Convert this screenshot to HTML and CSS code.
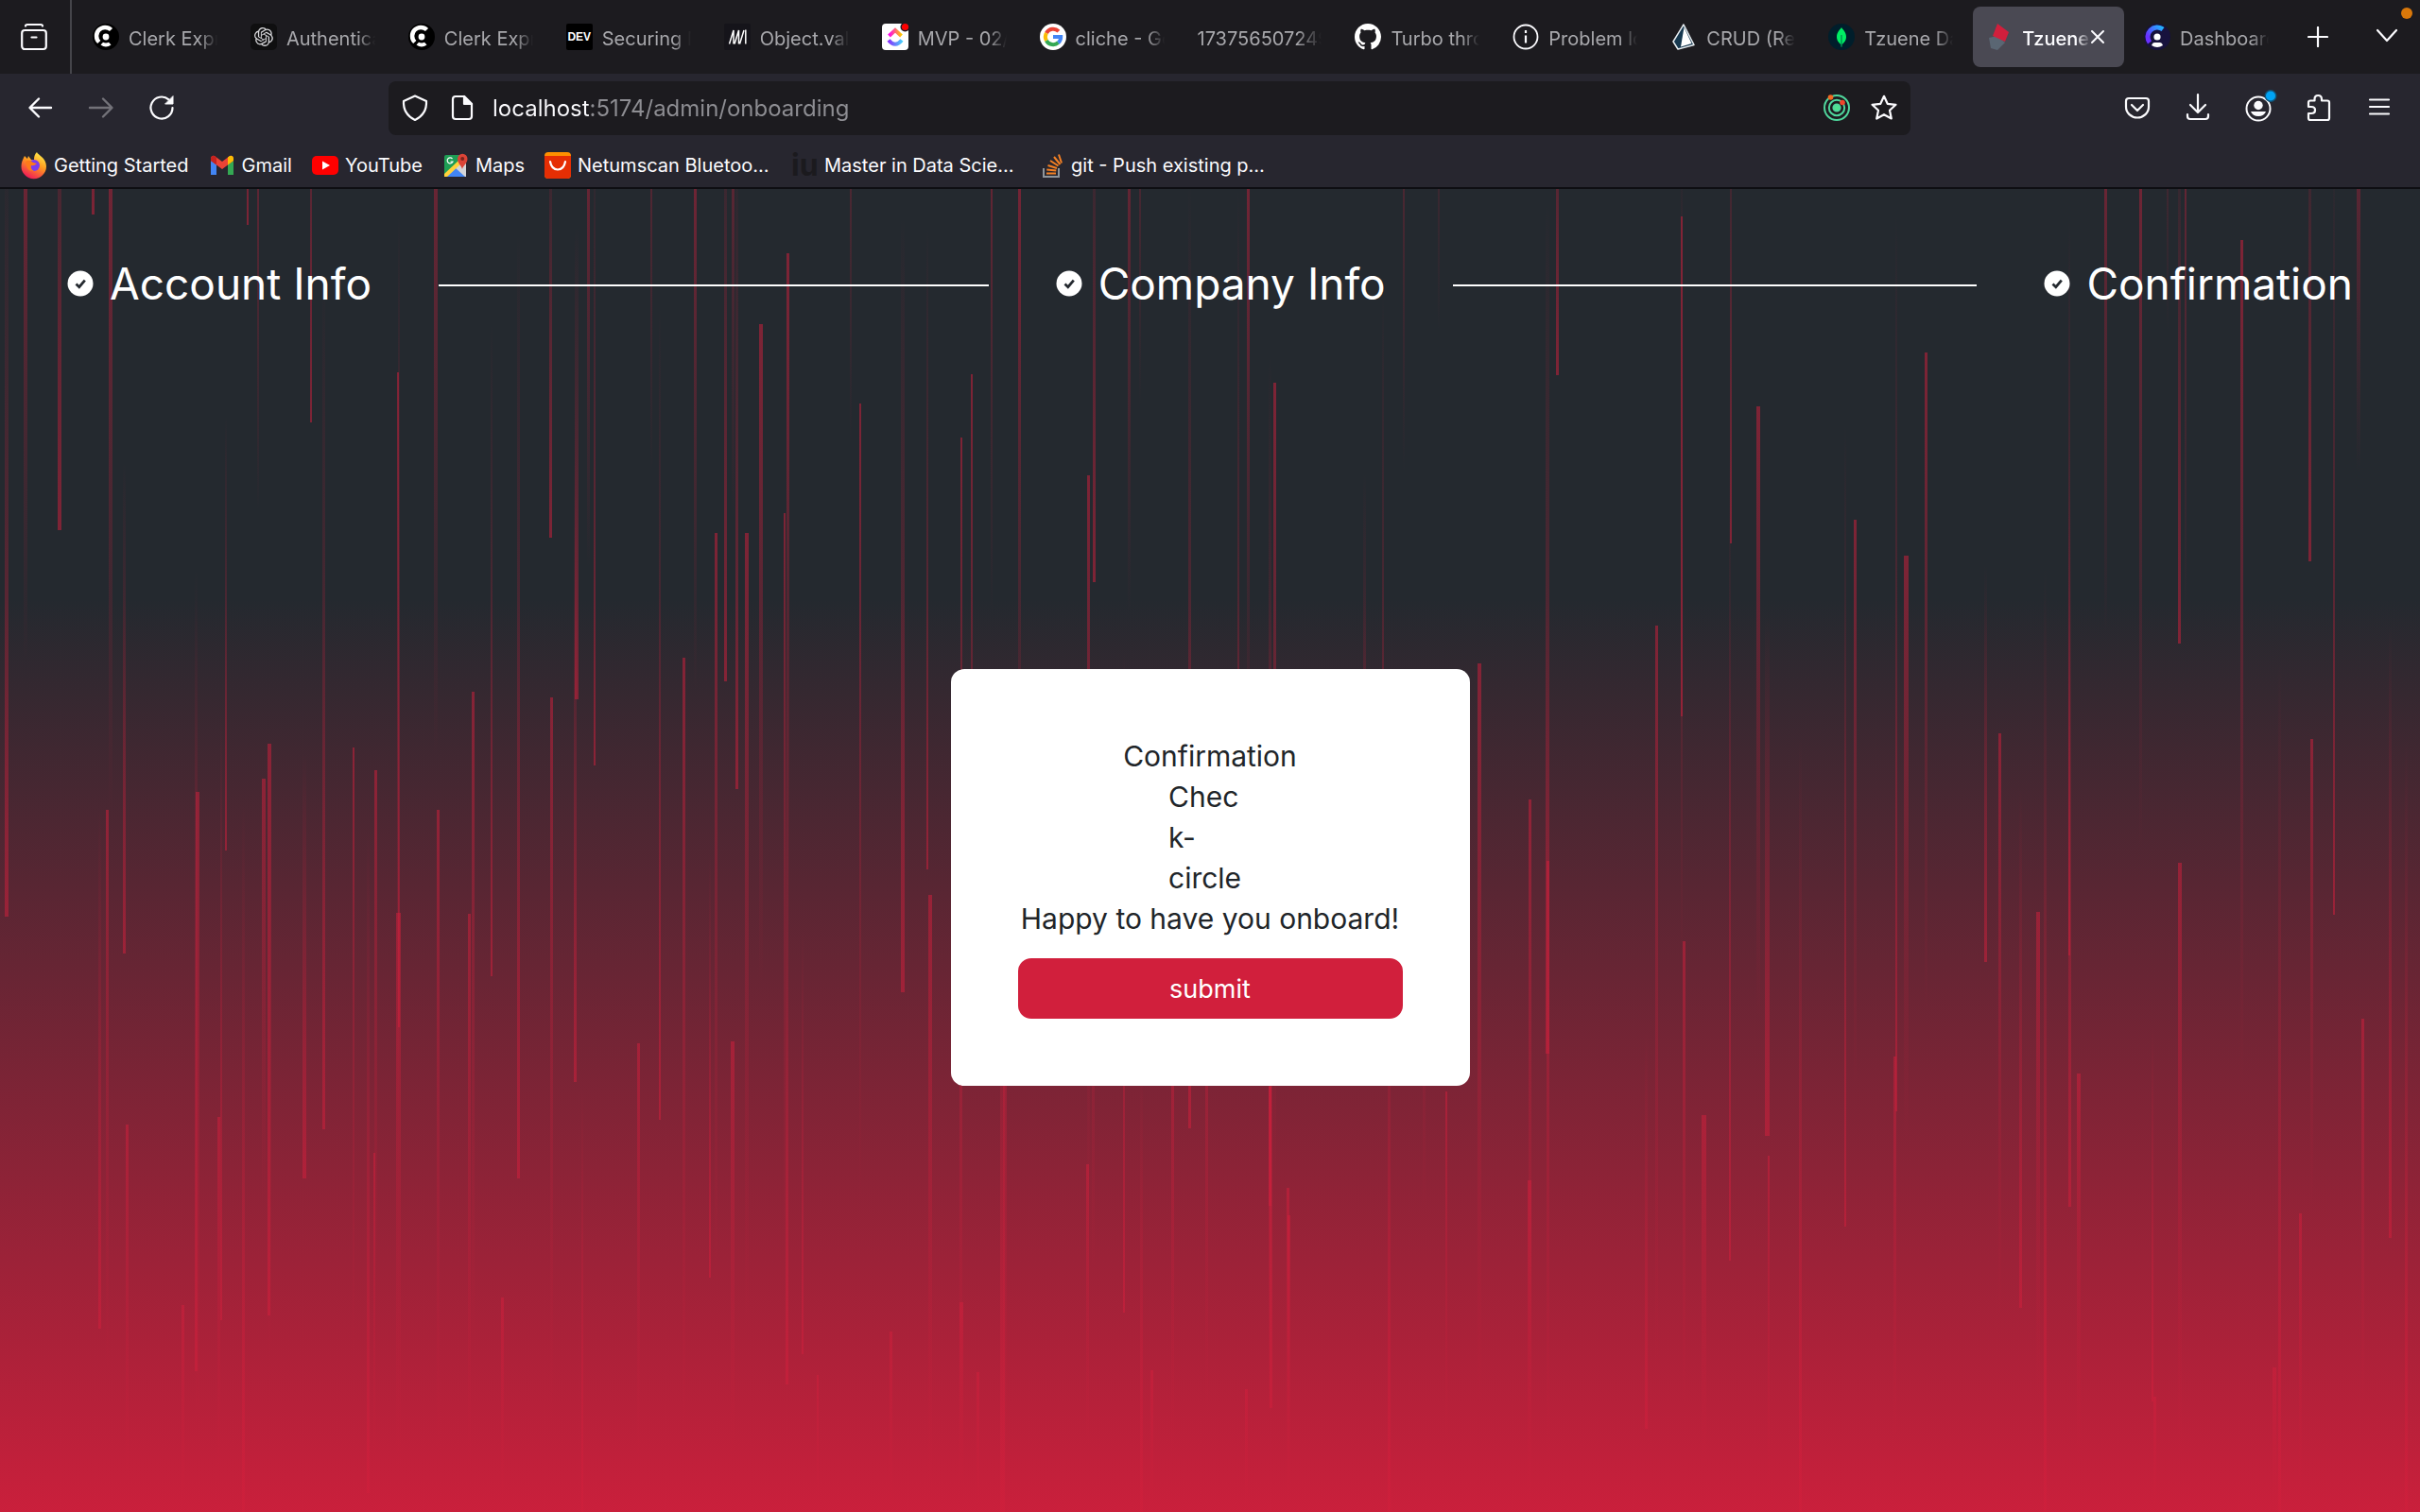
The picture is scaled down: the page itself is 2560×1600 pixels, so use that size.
FILE: index.html
```html
<!DOCTYPE html>
<html lang="en">
<head>
<meta charset="utf-8">
<title>Tzuene</title>
<link rel="stylesheet" href="styles.css">
</head>
<body>
<header class="chrome">
  <div class="tabbar">
    <button class="recent" aria-label="Recent browsing">
      <svg class="icon" viewBox="0 0 28 28" fill="none" stroke="#fbfbfe" stroke-width="2.2" stroke-linecap="round"><path d="M5 2.6C5 1 6 1 7 1h14c1 0 2 0 2 1.6"/><rect x="1.2" y="7" width="25.6" height="20" rx="3"/><path d="M11.5 14.5h5"/></svg>
    </button>
    <nav class="tabs" aria-label="Tabs">
      <div class="tab"><button class="tab-main"><svg class="icon" viewBox="0 0 28 28"><use href="#clerk"/></svg><span class="title">Clerk Expr</span></button></div>
      <div class="tab"><button class="tab-main"><svg class="icon" viewBox="0 0 28 28"><rect width="28" height="28" rx="5" fill="#0f0f10"/><path transform="translate(4 4) scale(.83)" fill="#d6d6d9" d="M22.2819 9.8211a5.9847 5.9847 0 0 0-.5157-4.9108 6.0462 6.0462 0 0 0-6.5098-2.9A6.0651 6.0651 0 0 0 4.9807 4.1818a5.9847 5.9847 0 0 0-3.9977 2.9 6.0462 6.0462 0 0 0 .7427 7.0966 5.98 5.98 0 0 0 .511 4.9107 6.051 6.051 0 0 0 6.5146 2.9001A5.9847 5.9847 0 0 0 13.2599 24a6.0557 6.0557 0 0 0 5.7718-4.2058 5.9894 5.9894 0 0 0 3.9977-2.9001 6.0557 6.0557 0 0 0-.7475-7.0729zm-9.022 12.6081a4.4755 4.4755 0 0 1-2.8764-1.0408l.1419-.0804 4.7783-2.7582a.7948.7948 0 0 0 .3927-.6813v-6.7369l2.02 1.1686a.071.071 0 0 1 .038.052v5.5826a4.504 4.504 0 0 1-4.4945 4.4944zm-9.6607-4.1254a4.4708 4.4708 0 0 1-.5346-3.0137l.142.0852 4.783 2.7582a.7712.7712 0 0 0 .7806 0l5.8428-3.3685v2.3324a.0804.0804 0 0 1-.0332.0615L9.74 19.9502a4.4992 4.4992 0 0 1-6.1408-1.6464zM2.3408 7.8956a4.485 4.485 0 0 1 2.3655-1.9728V11.6a.7664.7664 0 0 0 .3879.6765l5.8144 3.3543-2.0201 1.1685a.0757.0757 0 0 1-.071 0l-4.8303-2.7865A4.504 4.504 0 0 1 2.3408 7.872zm16.5963 3.8558L13.1038 8.364 15.1192 7.2a.0757.0757 0 0 1 .071 0l4.8303 2.7913a4.4944 4.4944 0 0 1-.6765 8.1042v-5.6772a.79.79 0 0 0-.407-.667zm2.0107-3.0231l-.142-.0852-4.7735-2.7818a.7759.7759 0 0 0-.7854 0L9.409 9.2297V6.8974a.0662.0662 0 0 1 .0284-.0615l4.8303-2.7866a4.4992 4.4992 0 0 1 6.6802 4.66zM8.3065 12.863l-2.02-1.1638a.0804.0804 0 0 1-.038-.0567V6.0742a4.4992 4.4992 0 0 1 7.3757-3.4537l-.142.0805L8.704 5.459a.7948.7948 0 0 0-.3927.6813zm1.0976-2.3654l2.602-1.4998 2.6069 1.4998v2.9994l-2.5974 1.4997-2.6067-1.4997Z"/></svg><span class="title">Authentica</span></button></div>
      <div class="tab"><button class="tab-main"><svg class="icon" viewBox="0 0 28 28"><use href="#clerk"/></svg><span class="title">Clerk Expr</span></button></div>
      <div class="tab"><button class="tab-main"><span class="icon dev">DEV</span><span class="title">Securing N</span></button></div>
      <div class="tab"><button class="tab-main"><svg class="icon" viewBox="0 0 28 28"><rect width="28" height="28" rx="2" fill="#15141a"/><path d="M5.500 21.500L10 7v14.500M11 21.500L15.500 7v14.500M16.500 21.500L21 7" fill="none" stroke="#fff" stroke-width="1.500" stroke-linejoin="bevel"/><path d="M22.800 6.500v15" stroke="#fff" stroke-width="1.500"/></svg><span class="title">Object.valu</span></button></div>
      <div class="tab"><button class="tab-main"><svg class="icon" viewBox="0 0 28 28"><defs><linearGradient id="cu1"><stop stop-color="#ff02f0"/><stop offset="1" stop-color="#ffc800"/></linearGradient><linearGradient id="cu2"><stop stop-color="#8930fd"/><stop offset="1" stop-color="#49ccf9"/></linearGradient></defs><rect width="28" height="28" rx="4" fill="#fff"/><path d="M7.500 13l6.500-6 6.500 6" fill="none" stroke="url(#cu1)" stroke-width="4"/><path d="M7 17.500q7 8.500 14 0" fill="none" stroke="url(#cu2)" stroke-width="4"/><circle cx="24.500" cy="3.500" r="5" fill="#1c1b22"/><circle cx="24.500" cy="3.500" r="3.600" fill="#f00"/></svg><span class="title">MVP - 02/</span></button></div>
      <div class="tab"><button class="tab-main"><svg class="icon" viewBox="0 0 28 28"><circle cx="14" cy="14" r="14" fill="#fff"/><g fill="none" stroke-width="4"><path d="M6.900 10a8.200 8.200 0 0 1 13-1.800" stroke="#ea4335"/><path d="M6.900 18a8.200 8.200 0 0 1 0-8" stroke="#fbbc05"/><path d="M19.500 20.100A8.200 8.200 0 0 1 6.900 18" stroke="#34a853"/><path d="M14 14h8.200q0 4-2.700 6.100" stroke="#4285f4"/></g></svg><span class="title">cliche - Go</span></button></div>
      <div class="tab"><button class="tab-main"><span class="title">173756507249</span></button></div>
      <div class="tab"><button class="tab-main"><svg class="icon" viewBox="0 0 16 16"><path fill="#fff" d="M8 0C3.580 0 0 3.580 0 8c0 3.540 2.290 6.530 5.470 7.590.4.070.55-.17.55-.38 0-.19-.01-.82-.01-1.490-2.010.37-2.530-.49-2.690-.94-.09-.23-.48-.94-.82-1.130-.28-.15-.68-.52-.01-.53.63-.01 1.080.58 1.230.82.72 1.210 1.870.87 2.330.66.07-.52.28-.87.51-1.070-1.780-.2-3.640-.89-3.640-3.950 0-.87.31-1.590.82-2.150-.08-.2-.36-1.020.08-2.120 0 0 .67-.21 2.200.82.64-.18 1.320-.27 2-.27s1.360.09 2 .27c1.530-1.040 2.200-.82 2.200-.82.44 1.100.16 1.920.08 2.120.51.56.82 1.270.82 2.150 0 3.070-1.870 3.750-3.650 3.950.29.25.54.73.54 1.480 0 1.070-.01 1.930-.01 2.200 0 .21.15.46.55.38A8.010 8.010 0 0 0 16 8c0-4.420-3.580-8-8-8z"/></svg><span class="title">Turbo thro</span></button></div>
      <div class="tab"><button class="tab-main"><svg class="icon" viewBox="0 0 28 28" fill="none" stroke="#fbfbfe"><circle cx="14" cy="14" r="12.500" stroke-width="1.800"/><path d="M14 12.500v8M14 7v3" stroke-width="2.200"/></svg><span class="title">Problem lo</span></button></div>
      <div class="tab"><button class="tab-main"><svg class="icon" viewBox="0 0 28 28"><path d="M14 1L3 19l5 8 17-4.500z" fill="#16384f" stroke="#e8eef2" stroke-width="1.500" stroke-linejoin="round"/><path d="M14.500 4L11 24.500l11.500-3.500z" fill="#fff"/></svg><span class="title">CRUD (Rea</span></button></div>
      <div class="tab"><button class="tab-main"><svg class="icon" viewBox="0 0 28 28"><circle cx="14" cy="14" r="14" fill="#001e2b"/><path d="M14 4c1 2 5 4.500 5 10 0 4-2.500 6.500-4.500 8v2.500h-1V22C11.500 20.500 9 18 9 14c0-5.500 4-8 5-10z" fill="#00ed64"/><path d="M14 12v12" stroke="#00684a"/></svg><span class="title">Tzuene Da</span></button></div>
      <div class="tab active"><button class="tab-main"><svg class="icon" viewBox="0 0 28 28"><path d="M3 15l9-2 8 7-8 8-7-2z" fill="#5a6673"/><path d="M12 0l12 9-4 10-13-6z" fill="#d11f3c"/></svg><span class="title">Tzuene</span></button><button class="close" aria-label="Close tab"><svg viewBox="0 0 16 16" stroke="#fbfbfe" stroke-width="2" stroke-linecap="round"><path d="M2 2l12 12M14 2L2 14"/></svg></button></div>
      <div class="tab"><button class="tab-main"><svg class="icon" viewBox="0 0 28 28"><defs><linearGradient id="ck" x1="0" y1="1" x2="1" y2="0"><stop offset=".2" stop-color="#6a30ff"/><stop offset="1" stop-color="#1fb6ff"/></linearGradient></defs><circle cx="14" cy="14" r="14" fill="#17123d"/><path d="M6 20A10 10 0 0 1 20 6" fill="none" stroke="url(#ck)" stroke-width="5"/><circle cx="14" cy="14" r="3.600" fill="#fff"/><path d="M8 23q1-3 3-3h6q2 0 3 3-6 4-12 0z" fill="#fff"/></svg><span class="title">Dashboard</span></button></div>
    </nav>
    <button class="newtab" aria-label="New tab"><svg viewBox="0 0 22 22" stroke="#fbfbfe" stroke-width="2.200" stroke-linecap="round"><path d="M11 1v20M1 11h20"/></svg></button>
    <button class="alltabs" aria-label="List all tabs"><svg viewBox="0 0 22 22" fill="none" stroke="#fbfbfe" stroke-width="2.200" stroke-linecap="round" stroke-linejoin="round"><path d="M1 4l10 11L21 4"/></svg></button>
    <span class="notice"></span>
  </div>

  <div class="toolbar">
    <div class="group">
      <button aria-label="Back"><svg class="icon" viewBox="0 0 28 28" fill="none" stroke="#fbfbfe" stroke-width="2.400" stroke-linecap="round" stroke-linejoin="round"><path d="M25 14H3M12 4.500L2.500 14l9.500 9.500"/></svg></button>
      <button aria-label="Forward" disabled><svg class="icon" viewBox="0 0 28 28" fill="none" stroke="#737279" stroke-width="2.400" stroke-linecap="round" stroke-linejoin="round"><path d="M2 14h23M16 4.500l9.500 9.500-9.500 9.500"/></svg></button>
      <button aria-label="Reload"><svg class="icon" viewBox="0 0 28 28" fill="none" stroke="#fbfbfe" stroke-width="2.200" stroke-linecap="round"><path d="M25.500 14a11.500 11.500 0 1 1-4-8.700"/><path d="M26 2v8h-8z" fill="#fbfbfe" stroke-width="1"/></svg></button>
    </div>
    <div class="urlbar">
      <button aria-label="Tracking protection"><svg class="icon" viewBox="0 0 28 28" fill="none" stroke="#fbfbfe" stroke-width="2.200" stroke-linejoin="round"><path d="M14 1.500L2 7c-.5 9 4 16 12 20 8-4 12.500-11 12-20z"/></svg></button>
      <button aria-label="Site information"><svg class="icon" viewBox="0 0 28 28" fill="none" stroke="#fbfbfe" stroke-width="2.200" stroke-linejoin="round"><path d="M16 2H7q-3 0-3 3v18q0 3 3 3h14q3 0 3-3V10z"/><path d="M16 2v8h8z" fill="#fbfbfe"/></svg></button>
      <input class="address" type="text" aria-label="Address" value="localhost:5174/admin/onboarding">
      <button aria-label="Developer extension"><svg class="icon" viewBox="0 0 28 28" fill="none" stroke="#4fd69c" stroke-width="2"><circle cx="14" cy="14" r="13"/><circle cx="14" cy="14" r="8.200"/><circle cx="14" cy="14" r="3.600" fill="#4fe08f"/><circle cx="7.500" cy="3" r="2.800" fill="#f26b21" stroke="none"/><circle cx="20" cy="8.500" r="2.800" fill="#f0452b" stroke="none"/></svg></button>
      <button aria-label="Bookmark"><svg class="icon" viewBox="0 0 28 28" fill="none" stroke="#fbfbfe" stroke-width="2.200" stroke-linejoin="round"><path d="M14 1.800l3.700 8 8.800 1-6.500 6 1.800 8.700-7.800-4.300-7.800 4.300L8 16.800l-6.500-6 8.800-1z"/></svg></button>
    </div>
    <div class="group">
      <button aria-label="Pocket"><svg class="icon" viewBox="0 0 28 28" fill="none" stroke="#fbfbfe" stroke-width="2.200" stroke-linecap="round" stroke-linejoin="round"><path d="M5 4h18q3 0 3 3v6a12 11.500 0 0 1-24 0V7q0-3 3-3zM8 11l6 6 6-6"/></svg></button>
      <button aria-label="Downloads"><svg class="icon" viewBox="0 0 28 28" fill="none" stroke="#fbfbfe" stroke-width="2.200" stroke-linecap="round" stroke-linejoin="round"><path d="M14 0v18M6 11l8 8 8-8M3 21v2q0 3 3 3h16q3 0 3-3v-2"/></svg></button>
      <button aria-label="Account"><svg class="icon" viewBox="0 0 28 28"><circle cx="14" cy="15" r="12.500" fill="none" stroke="#fbfbfe" stroke-width="2"/><circle cx="14" cy="11.500" r="4.700" fill="#fbfbfe"/><path d="M6 18h16q-2 5-8 5t-8-5z" fill="#fbfbfe"/><circle cx="27" cy="1.500" r="6.500" fill="#12557a"/><circle cx="27" cy="1.500" r="5" fill="#00a3f5"/></svg></button>
      <button aria-label="Extensions"><svg class="icon" viewBox="0 0 28 28" fill="none" stroke="#fbfbfe" stroke-width="2.200" stroke-linejoin="round"><path d="M9.500 6.500V5q0-4 3.700-4T17 5v1.500h6q2 0 2 2V25q0 2-2 2H5q-2 0-2-2v-5h3q4 0 4-3.500T6 13H3V8.500q0-2 2-2z"/></svg></button>
      <button aria-label="Menu"><svg class="icon" viewBox="0 0 28 28" stroke="#fbfbfe" stroke-width="2.200" stroke-linecap="round"><path d="M4 5.500h20M4 13h20M4 20.500h20"/></svg></button>
    </div>
  </div>

  <nav class="bookmarks" aria-label="Bookmarks">
    <a href="#"><svg class="icon" viewBox="0 0 28 28"><defs><linearGradient id="fx" x1=".8" y1="0" x2=".3" y2="1"><stop stop-color="#fff44f"/><stop offset=".45" stop-color="#ff9a1f"/><stop offset="1" stop-color="#f0145a"/></linearGradient></defs><path d="M17 0c1 3 10 6 10 15a13.200 13.200 0 0 1-26.500 0C.5 11 2 8 3 6l1-2 3 3 1-3 3 4h3c0-4 1-6 3-8z" fill="url(#fx)"/><circle cx="14" cy="14" r="6" fill="#7a3cf0"/><path d="M5 10q4-3 8 1l4 1q-3 3-6 2-1 4 3 6-8 1-9-10z" fill="#ff7a1a"/></svg><span>Getting Started</span></a>
    <a href="#"><svg class="icon" viewBox="0 0 28 28"><path d="M2 24V9l6 4v11z" fill="#4285f4"/><path d="M26 24V9l-6 4v11z" fill="#34a853"/><path d="M2 9V6q1-3 4-2l8 6 8-6q3-1 4 2v3l-12 9z" fill="#ea4335"/><path d="M20 5.500l2-1.500q3-1 4 2v3l-6 4.500z" fill="#fbbc04"/><path d="M8 5.500L6 4Q3 3 2 6v3l6 4.500z" fill="#c5221f"/></svg><span>Gmail</span></a>
    <a href="#"><svg class="icon" viewBox="0 0 28 28"><rect y="4" width="28" height="20" rx="5" fill="#f00"/><path d="M11 9.500v9l8-4.500z" fill="#fff"/></svg><span>YouTube</span></a>
    <a href="#"><svg class="icon" viewBox="0 0 28 28"><rect x="2" y="3" width="23" height="23" rx="2" fill="#1e9e55"/><path d="M2 26L25 4v22z" fill="#d5d5d8"/><path d="M4 26l10-9 10 9z" fill="#4285f4"/><path d="M2 23L18 8l2 4L5 26H2z" fill="#ffd23c"/><path d="M21 18c-1-4-5-6-5-11a5 5 0 0 1 10.500 0c0 5-4.500 7-5.500 11z" fill="#db4437"/><circle cx="21.200" cy="7" r="2" fill="#7b231d"/><path d="M10.500 7a3 3 0 1 0 .5 3H8.500" fill="none" stroke="#fff" stroke-width="1.200"/></svg><span>Maps</span></a>
    <a href="#"><svg class="icon" viewBox="0 0 28 28"><rect width="28" height="28" rx="4" fill="#ff9000"/><path d="M0 4h28v20q0 4-4 4H4q-4 0-4-4z" fill="#e62e04"/><path d="M6 10q1.500 8.500 8 8.500t8-8.500" fill="none" stroke="#fff" stroke-width="2.200" stroke-linecap="round"/></svg><span class="long">Netumscan Bluetoo…</span></a>
    <a href="#"><span class="icon iu">iu</span><span class="long">Master in Data Scie…</span></a>
    <a href="#"><svg class="icon" viewBox="0 0 28 28" fill="none"><path d="M6 17v9h16v-9" stroke="#8f959b" stroke-width="2"/><path d="M9 22.500h10M9.300 18.500l10 1M10.500 14l9.500 3M13 9l8.500 5.500M17 5l6.500 8M22 2.500l3 9" stroke="#f48024" stroke-width="2"/></svg><span class="long">git - Push existing p…</span></a>
  </nav>
</header>

<main class="page">
  <svg class="rain" viewBox="0 200 2560 1400" preserveAspectRatio="none" aria-hidden="true">
    <defs>
      <linearGradient id="down" x1="0" y1="0" x2="0" y2="1"><stop stop-color="#d11f3c" stop-opacity="0"/><stop offset="1" stop-color="#d11f3c" stop-opacity=".52"/></linearGradient>
      <linearGradient id="up" x1="0" y1="1" x2="0" y2="0"><stop stop-color="#d11f3c" stop-opacity="0"/><stop offset="1" stop-color="#d11f3c" stop-opacity=".52"/></linearGradient>
    </defs>
  </svg>

  <ol class="steps">
    <li><span class="step"><svg class="check" viewBox="0 0 28 28"><use href="#tick"/></svg>Account Info</span><span class="line"></span></li>
    <li><span class="step"><svg class="check" viewBox="0 0 28 28"><use href="#tick"/></svg>Company Info</span><span class="line"></span></li>
    <li><span class="step"><svg class="check" viewBox="0 0 28 28"><use href="#tick"/></svg>Confirmation</span></li>
  </ol>

  <section class="stage">
    <form class="card">
      <p>Confirmation</p>
      <p class="glyph">Chec<br>k-<br>circle</p>
      <p>Happy to have you onboard!</p>
      <button class="submit" type="button">submit</button>
    </form>
  </section>
</main>

<svg class="symbols" aria-hidden="true">
  <symbol id="clerk" viewBox="0 0 28 28"><circle cx="14" cy="14" r="14" fill="#000"/><path d="M19.500 6.500A9 9 0 0 0 6.800 19.500" fill="none" stroke="#fff" stroke-width="4.500"/><circle cx="14" cy="14" r="3.400" fill="#fff"/><path d="M8.500 22.500l2.500-2.700q3 1.600 6 0l2.500 2.700q-5.500 4-11 0z" fill="#fff"/></symbol>
  <symbol id="tick" viewBox="0 0 28 28"><circle cx="14" cy="14" r="13.500" fill="#fff"/><path d="M9.500 14.500l3.300 3.200 6-7" fill="none" stroke="#24292f" stroke-width="2.800"/></symbol>
</svg>
<script src="rain.js"></script>
</body>
</html>
```
FILE: styles.css
```css
* { box-sizing: border-box; }

body {
  margin: 0;
  min-height: 100vh;
  display: flex;
  flex-direction: column;
  font-family: Inter, "Liberation Sans", sans-serif;
  color: #fbfbfe;
  background: #24292f;
}

button {
  border: 0;
  padding: 0;
  margin: 0;
  background: none;
  color: inherit;
  font: inherit;
  display: flex;
  align-items: center;
  justify-content: center;
}

.symbols { position: absolute; width: 0; height: 0; }
.icon { width: 28px; height: 28px; flex: none; overflow: visible; }

/* Browser chrome */
.chrome { background: #27262f; border-bottom: 2px solid #0e0e12; font-size: 20px; }

.tabbar { position: relative; display: flex; height: 78px; background: #1c1b1f; }
.recent { width: 76px; flex: none; padding-right: 3px; border-right: 2px solid #45454a; }
.tabs {
  flex: 1;
  min-width: 0;
  display: grid;
  grid-auto-flow: column;
  grid-auto-columns: minmax(0, 1fr);
  align-items: center;
  gap: 7px;
  padding-left: 8px;
}
.tab { height: 64px; display: flex; align-items: center; padding: 0 14px; border-radius: 8px; color: #a8a8ac; }
.tab-main { flex: 1; min-width: 0; gap: 10px; height: 100%; }
.title {
  flex: 1;
  min-width: 0;
  overflow: hidden;
  white-space: nowrap;
  text-align: left;
  line-height: 28px;
  padding-top: 4px;
  -webkit-mask-image: linear-gradient(to right, #000 80%, transparent);
  mask-image: linear-gradient(to right, #000 80%, transparent);
}
.active { padding-right: 20px; background: #4a4953; color: #fbfbfe; font-weight: 500; }
.dev { border-radius: 2px; background: #000; color: #fff; font: bold 12px/28px "Liberation Sans", sans-serif; text-align: center; }
.close { width: 16px; flex: none; }
.close svg { width: 16px; height: 16px; }
.newtab { width: 76px; flex: none; }
.alltabs { width: 70px; flex: none; }
.newtab svg, .alltabs svg { width: 22px; height: 22px; }
.notice { position: absolute; top: 8px; right: 8px; width: 12px; height: 12px; border-radius: 50%; background: #d9780a; }

.toolbar { display: flex; align-items: center; gap: 208px; height: 72px; padding: 0 11px; }
.group { display: flex; }
.group button { width: 64px; height: 56px; }
.urlbar { flex: 1; min-width: 0; display: flex; align-items: center; height: 57px; padding: 0 3px; border-radius: 8px; background: #1c1b1f; }
.urlbar button { width: 50px; height: 56px; flex: none; }
.address {
  flex: 1;
  min-width: 0;
  border: 0;
  outline: 0;
  padding: 0 7px;
  font: 24px Inter, "Liberation Sans", sans-serif;
  color: transparent;
  background: linear-gradient(to right, #fbfbfe 110px, #8e8e93 110px);
  -webkit-background-clip: text;
  background-clip: text;
}

.bookmarks { display: flex; gap: 21px; height: 48px; padding: 2px 22px 0; align-items: center; }
.bookmarks a { display: flex; align-items: center; gap: 7px; color: inherit; text-decoration: none; white-space: nowrap; }
.long { width: 205px; }
.iu { color: #1b1a1e; font: bold 32px/28px Inter, sans-serif; }

/* Onboarding page */
.page {
  position: relative;
  flex: 1;
  display: flex;
  flex-direction: column;
  background: linear-gradient(#24292f 31%, #d11f3c 103%);
}
.rain { position: absolute; inset: 0; width: 100%; height: 100%; }

.steps {
  position: relative;
  display: flex;
  margin: 0;
  padding: 0;
  height: 200px;
  list-style: none;
  font-size: 46px;
  color: #fff;
}
.steps li { display: flex; align-items: center; flex: 1; }
.steps li:last-child { flex: none; }
.step { display: flex; align-items: center; gap: 17px; padding: 0 71px; white-space: nowrap; }
.check { width: 28px; height: 28px; flex: none; }
.line { flex: 1; height: 2px; margin-top: 4px; background: #fff; }

.stage { position: relative; flex: 1; display: flex; align-items: center; justify-content: center; padding-bottom: 143px; }
.card {
  display: flex;
  flex-direction: column;
  align-items: center;
  min-width: 549px;
  padding: 71px;
  border-radius: 14px;
  background: #fff;
  color: #212529;
  font-size: 30px;
  line-height: 43px;
}
.card p { margin: 0; }
.glyph { width: 88px; }
.submit {
  align-self: stretch;
  height: 64px;
  margin-top: 20px;
  border-radius: 14px;
  background: #d11f3c;
  color: #fff;
  font-size: 27px;
}
```
FILE: rain.js
```js
// Streaks of the background: [x, bright end, length, width]
const falling = [
  [7,970,820,4],[63,561,600,4],[98,227,300,3],[262,238,300,2],[329,447,600,2],[342,1195,900,3],
  [239,900,460,2],[131,1009,520,3],[422,1087,860,2],[520,1033,690,2],[548,1247,1000,3],[582,569,500,3],
  [610,740,500,4],[629,810,700,2],[698,1185,860,2],[767,721,700,3],[779,835,700,3],[955,1050,820,4],
  [981,920,680,2],[1157,616,560,3],[1258,1194,1000,3],[1310,1100,900,2],[1443,1100,600,3],[1463,1110,800,2],
  [1637,1115,900,4],[1647,397,450,3],[1779,758,600,2],[1831,575,550,2],[1952,1298,850,2],[2006,1176,950,2],
  [2189,1011,780,2],[2189,1277,760,3],[2305,681,600,3],[2443,594,550,3],[2469,968,820,2],
  [105,1406,550,3],[207,1451,850,3],[234,1397,650,2],[257,1600,750,3],[284,1392,600,3],[322,1247,450,4],
  [389,1580,700,3],[608,1145,660,3],[616,1600,450,2],[751,1352,450,2],[832,1465,850,3],[849,1433,450,2],
  [1741,1512,420,3],[1830,1334,850,2],[1869,1202,550,5],[1904,1600,820,3],[2100,1018,420,3],[2137,1384,550,3],
  [2163,1600,1000,3],[2277,1483,400,2],[2411,1600,900,3],[2528,1310,650,3],[2545,1600,820,3],
  [1060,1600,860,5],[1189,1389,700,2],[1343,1276,900,3],[1344,1490,700,3],[1207,1620,500,3],[1469,1620,750,3]
];
const rising = [
  [27,60,640,4],[117,80,780,4],[273,0,540,2],[461,0,800,4],[622,50,550,3],[689,-100,600,2],[735,80,650,3],
  [775,-50,600,3],[757,564,800,3],[790,564,850,4],[805,343,700,4],[830,543,800,2],[833,268,750,3],[723,696,850,3],
  [900,-150,620,2],[910,427,850,2],[1017,463,700,2],[1028,396,750,2],[1049,0,650,2],[1078,100,850,3],
  [1151,503,800,3],[1194,0,650,3],[1206,-150,580,2],[1320,100,700,3],[1348,405,850,3],[1485,-200,700,2],
  [1522,-250,600,2],[1752,662,800,3],[1779,229,800,2],[1860,430,650,4],[1962,550,600,3],[2016,588,620,5],
  [2037,373,700,3],[2227,50,620,3],[2264,50,850,3],[2293,-150,500,2],[2312,0,650,2],[2371,254,900,3],
  [2495,0,500,4],[421,394,800,2],
  [113,857,600,3],[134,1190,380,3],[193,1381,220,3],[209,838,680,4],[231,1182,380,3],[279,824,450,4],
  [285,787,650,4],[374,791,650,2],[396,1220,330,2],[397,815,550,3],[421,966,600,5],[463,857,700,3],
  [496,967,600,3],[500,732,700,3],[531,1373,220,3],[583,738,780,3],[675,1104,450,3],[775,1102,450,4],
  [865,1455,130,2],[942,1409,190,3],[984,947,650,4],[1565,702,800,4],[1618,846,650,3],[1618,1249,350,4],
  [1637,911,650,3],[1781,996,500,3],[1802,1180,380,5],[1871,1223,370,2],[2004,1118,420,3],[2115,776,620,3],
  [2156,965,520,4],[2199,1136,420,4],[2279,1478,120,3],[2306,913,650,4],[2406,1447,150,4],[2433,1284,310,3],
  [2445,782,500,3],[2499,1078,420,3],
  [1017,1378,200,4],[1016,900,650,3],[1034,1452,150,3],[1063,950,630,4],[1150,1232,300,3],[1156,800,550,3],
  [1240,1050,500,3],[1276,950,550,3],[1343,1150,350,3],[1318,1470,130,3],[1218,1450,150,3],[1362,1257,330,3],
  [1363,1286,300,3],[1506,720,560,3],[1530,1155,380,2]
];

const rain = document.querySelector(".rain");
function streak(x, y, length, width, fill) {
  const rect = document.createElementNS("http://www.w3.org/2000/svg", "rect");
  rect.setAttribute("x", x - Math.floor(width / 2));
  rect.setAttribute("y", y);
  rect.setAttribute("width", width);
  rect.setAttribute("height", length);
  rect.setAttribute("fill", `url(#${fill})`);
  rain.append(rect);
}
falling.forEach(([x, end, length, width]) => streak(x, end - length, length, width, "down"));
rising.forEach(([x, start, length, width]) => streak(x, start, length, width, "up"));
```
